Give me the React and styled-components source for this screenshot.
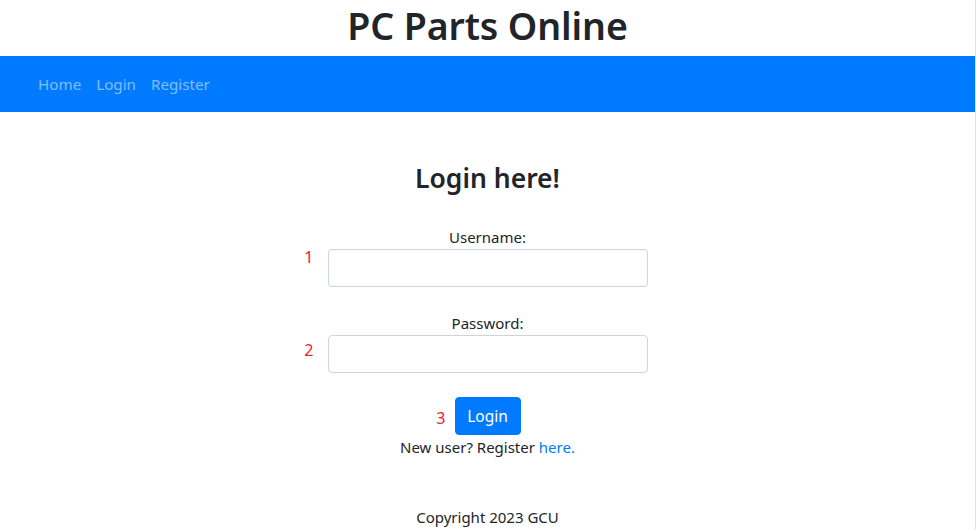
import React from "react";
import styled, { createGlobalStyle } from "styled-components";

const GlobalStyle = createGlobalStyle`
  html, body {
    margin: 0;
    padding: 0;
    background: #fff;
  }
  body {
    font-family: "Noto Sans", "Open Sans", sans-serif;
    color: #212529;
    font-size: 16px;
  }
`;

const Page = styled.div`
  min-height: 529px;
  display: flex;
  flex-direction: column;
  border-right: 1px solid #e2e2e2;
  box-sizing: border-box;
`;

const Header = styled.header`
  height: 56px;
  display: flex;
  align-items: center;
  justify-content: center;
`;

const Title = styled.h1`
  margin: 0 0 5px;
  font-size: 37.5px;
  font-weight: 600;
  line-height: 1;
  letter-spacing: -0.1px;
`;

const NavBar = styled.nav`
  height: 56px;
  background: #007bff;
  display: flex;
  align-items: center;
  padding-left: 38px;
  gap: 15px;
`;

const NavLink = styled.a`
  color: rgba(255, 255, 255, 0.5);
  text-decoration: none;
  font-size: 15.2px;
  line-height: 24px;
`;

const Main = styled.main`
  display: flex;
  flex-direction: column;
  align-items: center;
  padding-top: 49px;
`;

const Heading = styled.h2`
  margin: 0 0 30px;
  font-size: 26.5px;
  font-weight: 600;
  line-height: 34px;
`;

const Form = styled.form`
  display: flex;
  flex-direction: column;
  align-items: stretch;
  width: 100%;
`;

const Label = styled.label`
  text-align: center;
  font-size: 15px;
  line-height: 24px;
  margin-top: ${(p) => (p.$first ? "0" : "24px")};
`;

const Row = styled.div`
  display: grid;
  grid-template-columns: 1fr auto 1fr;
  column-gap: ${(p) => p.$gap || "14px"};
  margin-top: ${(p) => p.$top || "0"};
`;

const Marker = styled.span`
  justify-self: end;
  color: #f0202f;
  font-size: 16px;
  line-height: 24px;
  margin-top: ${(p) => p.$offset || "0"};
`;

const Input = styled.input`
  width: 320px;
  height: 38px;
  box-sizing: border-box;
  border: 1px solid #ced4da;
  border-radius: 4px;
  padding: 6px 12px;
  font: inherit;
`;

const Button = styled.button`
  background: #007bff;
  color: #fff;
  border: 1px solid #007bff;
  border-radius: 4px;
  height: 38px;
  width: 66px;
  padding: 0;
  font-family: inherit;
  font-size: 15.5px;
`;

const Note = styled.p`
  margin: 0;
  text-align: center;
  font-size: 15px;
  line-height: 24px;
`;

const TextLink = styled.a`
  color: #007bff;
  text-decoration: none;
`;

const Footer = styled.footer`
  text-align: center;
  font-size: 15px;
  line-height: 24px;
  margin-top: 46px;
`;

export default function App() {
  return (
    <Page>
      <GlobalStyle />
      <Header>
        <Title>PC Parts Online</Title>
      </Header>
      <NavBar>
        <NavLink href="#">Home</NavLink>
        <NavLink href="#">Login</NavLink>
        <NavLink href="#">Register</NavLink>
      </NavBar>
      <Main>
        <Heading>Login here!</Heading>
        <Form onSubmit={(e) => e.preventDefault()}>
          <Label $first htmlFor="username">Username:</Label>
          <Row>
            <Marker $offset="-4px">1</Marker>
            <Input id="username" type="text" />
          </Row>
          <Label htmlFor="password">Password:</Label>
          <Row>
            <Marker $offset="3px">2</Marker>
            <Input id="password" type="password" />
          </Row>
          <Row $top="24px" $gap="9px">
            <Marker $offset="9px">3</Marker>
            <Button type="submit">Login</Button>
          </Row>
          <Note>
            New user? Register <TextLink href="#">here.</TextLink>
          </Note>
        </Form>
        <Footer>Copyright 2023 GCU</Footer>
      </Main>
    </Page>
  );
}
